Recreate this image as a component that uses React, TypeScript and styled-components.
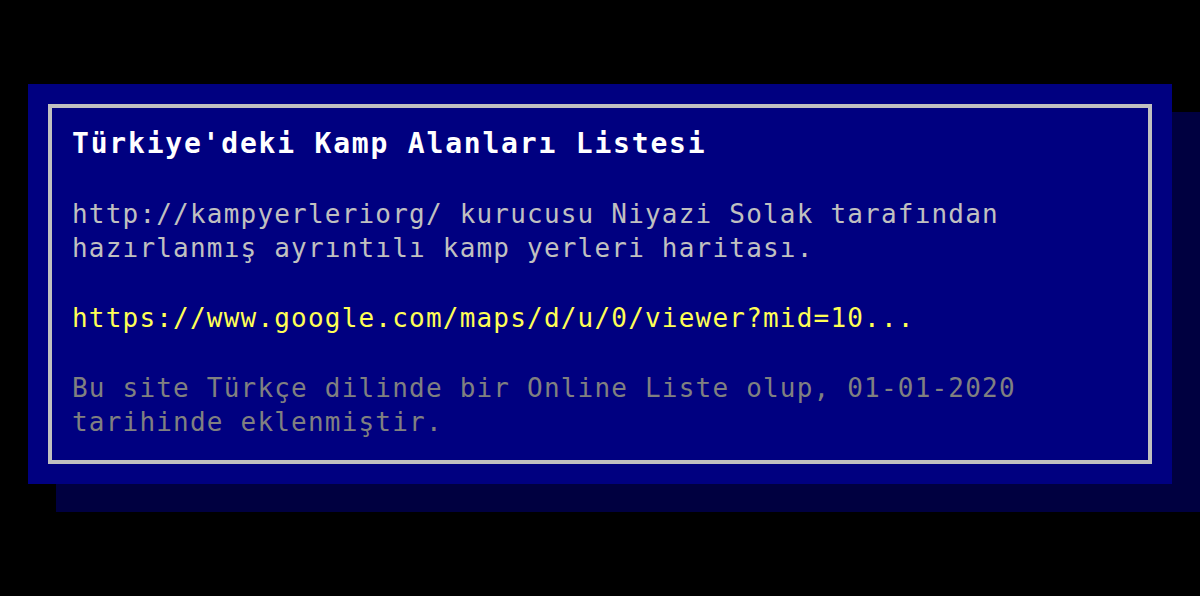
import styled, { createGlobalStyle } from 'styled-components'

const GlobalStyle = createGlobalStyle`
  html, body {
    margin: 0;
    padding: 0;
    background: #000000;
  }
  body {
    font-family: 'DejaVu Sans Mono', 'Liberation Mono', monospace;
  }
`

const Page = styled.div`
  width: 1200px;
  height: 596px;
  padding: 84px 28px 0;
  box-sizing: border-box;
  background: #000000;
  overflow: hidden;
`

const Window = styled.section`
  height: 400px;
  box-sizing: border-box;
  padding: 20px;
  background: #000080;
  box-shadow: 28px 28px 0 #000040;
`

const Frame = styled.div`
  height: 100%;
  box-sizing: border-box;
  border: 4px solid #c0c0c0;
  padding: 17px 20px 20px;
  display: flex;
  flex-direction: column;
  gap: 36px;
`

const Title = styled.h1`
  margin: 0 0 -2px;
  font-size: 28px;
  line-height: 38px;
  font-weight: bold;
  letter-spacing: 1.8px;
  color: #ffffff;
`

const Text = styled.p<{ $tone: 'light' | 'link' | 'dim' }>`
  margin: 0;
  font-size: 26px;
  line-height: 34px;
  letter-spacing: 1.2px;
  color: ${(p) => (p.$tone === 'link' ? '#ffff55' : p.$tone === 'dim' ? '#808080' : '#c0c0c0')};
`

const App = () => {
  return (
    <>
      <GlobalStyle />
      <Page>
        <Window>
          <Frame>
            <Title>Türkiye'deki Kamp Alanları Listesi</Title>
            <Text $tone='light'>
              http://kampyerleriorg/ kurucusu Niyazi Solak tarafından hazırlanmış ayrıntılı kamp yerleri
              haritası.
            </Text>
            <Text $tone='link'>https://www.google.com/maps/d/u/0/viewer?mid=10...</Text>
            <Text $tone='dim'>
              Bu site Türkçe dilinde bir Online Liste olup, 01-01-2020 tarihinde eklenmiştir.
            </Text>
          </Frame>
        </Window>
      </Page>
    </>
  )
}

export default App
